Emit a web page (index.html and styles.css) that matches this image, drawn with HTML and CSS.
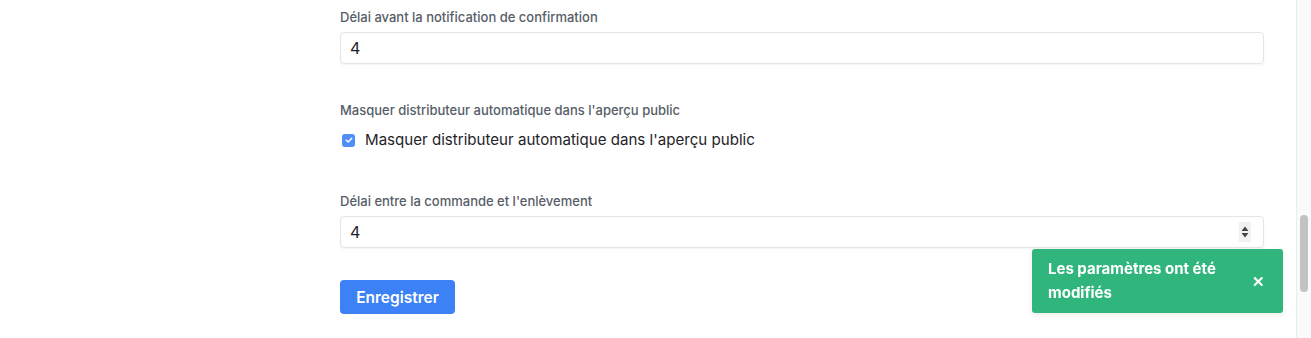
FILE: index.html
```html
<html>
<head>
<meta charset="utf-8" />
<title>Paramètres</title>
<link rel="stylesheet" href="styles.css">
</head>
<body>

<div id="settings">

    <div class="field">
        <label class="field-label" for="notif-delay">Délai avant la notification de confirmation</label>
        <div class="input">4</div>
    </div>

    <div class="field field-check">
        <span class="field-label">Masquer distributeur automatique dans l'aperçu public</span>
        <label class="check">
            <span class="box">
                <svg viewBox="0 0 12 12" width="12" height="12"><path d="M3.3 6.2 L5.2 8 L8.7 4.3" fill="none" stroke="#fff" stroke-width="1.5" stroke-linecap="round" stroke-linejoin="round"/></svg>
            </span>
            Masquer distributeur automatique dans l'aperçu public
        </label>
    </div>

    <div class="field">
        <label class="field-label" for="pickup-delay">Délai entre la commande et l'enlèvement</label>
        <div class="input input-number">
            <span>4</span>
            <span class="spinner">
                <svg viewBox="0 0 12 16" width="12" height="16"><path d="M6 2.5 L9.5 7 L2.5 7 Z M6 13.5 L9.5 9 L2.5 9 Z" fill="#444"/></svg>
            </span>
        </div>
    </div>

    <button class="save">Enregistrer</button>

</div>

<div id="toast">
    <span class="toast-text">Les paramètres ont été modifiés</span>
    <span class="toast-close">&#x2715;</span>
</div>

<div id="scrollbar"><div class="thumb"></div></div>

</body>
</html>
```

FILE: styles.css
```css
body {
    background: #fff;
    margin: 0;
    font-family: Inter, "Noto Sans", sans-serif;
    color: #111827;
}

#settings {
    width: 924px;
    margin-left: 340px;
    padding-top: 7px;
}

.field {
    margin-bottom: 36px;
}

.field-label {
    display: block;
    font-size: 13px;
    font-weight: 500;
    line-height: 20px;
    color: #575d67;
    margin-bottom: 5px;
}

.input {
    box-sizing: border-box;
    height: 32px;
    border: 1px solid #e3e5e8;
    border-radius: 4px;
    box-shadow: 0 1px 2px rgba(0,0,0,0.05);
    padding: 0 9px;
    font-size: 16px;
    line-height: 30px;
    color: #1f2328;
}

.input-number {
    display: flex;
    justify-content: space-between;
    align-items: center;
    padding-right: 12px;
}

.spinner {
    display: flex;
    align-items: center;
    background: #f1f1f1;
    height: 20px;
}

.field-check {
    margin-bottom: 41px;
}

.field-check .field-label {
    margin-bottom: 10px;
}

.check {
    display: flex;
    align-items: center;
    gap: 10px;
    font-size: 15.1px;
    line-height: 20px;
    color: #1f2328;
    padding-left: 2px;
}

.box {
    width: 13px;
    height: 13px;
    border-radius: 3px;
    background: #4f8ff7;
    display: flex;
    align-items: center;
    justify-content: center;
}

.save {
    margin-top: -4px;
    height: 34px;
    width: 115px;
    padding: 0;
    border: 0;
    border-radius: 4px;
    background: #3c82f6;
    color: #fff;
    font-family: Inter, "Noto Sans", sans-serif;
    font-size: 15.5px;
    font-weight: 600;
}

#toast {
    position: fixed;
    left: 1032px;
    top: 249px;
    width: 251px;
    height: 64px;
    box-sizing: border-box;
    border-radius: 3px;
    background: #30b67c;
    color: #fff;
    display: flex;
    align-items: center;
    padding: 0 18px 0 16px;
    gap: 20px;
    box-shadow: 0 2px 6px rgba(0,0,0,0.08);
}

.toast-text {
    flex: 1;
    font-size: 15px;
    font-weight: 700;
    line-height: 24px;
}

.toast-close {
    font-size: 15px;
    font-weight: 800;
}

#scrollbar {
    position: fixed;
    top: 0;
    right: 0;
    width: 14px;
    height: 100%;
    background: #fafafa;
    border-left: 1px solid #ececec;
}

#scrollbar .thumb {
    position: absolute;
    left: 3px;
    top: 215px;
    width: 8px;
    height: 77px;
    border-radius: 4px;
    background: #c2c2c2;
}
```
